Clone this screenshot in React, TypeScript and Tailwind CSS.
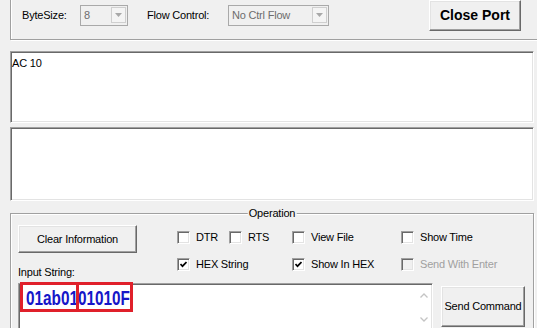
import React from "react";

// ── small win32-looking pieces ────────────────────────────────────────────────
function Combo({ value, width }: { value: string; width: string }) {
  return (
    <div
      className={`${width} h-[21px] flex items-center border border-[#a9a9a9] bg-[#f0f0f0]`}
    >
      <span className="pl-[3px] text-[#6d6d6d] leading-none">{value}</span>
      <span className="ml-auto mr-[1px] w-[15px] h-[16px] flex items-center justify-center border border-[#cfcfcf] bg-[#f4f4f4]">
        <svg width="7" height="4" viewBox="0 0 7 4">
          <polygon points="0,0 7,0 3.5,4" fill="#a8a8a8" />
        </svg>
      </span>
    </div>
  );
}

function Button({
  children,
  className = "",
}: {
  children: React.ReactNode;
  className?: string;
}) {
  return (
    <div
      className={`flex items-center justify-center whitespace-nowrap bg-[#f0f0f0] border border-t-white border-l-white border-r-[#696969] border-b-[#696969] shadow-[inset_-1px_-1px_0_#a0a0a0,inset_1px_1px_0_#e3e3e3] ${className}`}
    >
      {children}
    </div>
  );
}

function Check({
  label,
  checked,
  disabled,
  className = "",
}: {
  label: string;
  checked?: boolean;
  disabled?: boolean;
  className?: string;
}) {
  return (
    <div className={`flex items-center gap-[6px] h-[13px] whitespace-nowrap ${className}`}>
      <span
        className={`w-[13px] h-[13px] shrink-0 flex items-center justify-center border border-t-[#a0a0a0] border-l-[#a0a0a0] border-r-white border-b-white shadow-[inset_1px_1px_0_#696969,inset_-1px_-1px_0_#e3e3e3] ${
          disabled ? "bg-[#f0f0f0]" : "bg-white"
        }`}
      >
        {checked && (
          <svg width="7" height="7" viewBox="0 0 7 7">
            <polyline
              points="0.5,3 2.5,5.2 6.5,1"
              fill="none"
              stroke="#000"
              strokeWidth="1.7"
            />
          </svg>
        )}
      </span>
      <span className={`leading-none ${disabled ? "text-[#a0a0a0]" : ""}`}>
        {label}
      </span>
    </div>
  );
}

const SUNKEN =
  "border border-t-[#a0a0a0] border-l-[#a0a0a0] border-r-white border-b-white shadow-[inset_1px_1px_0_#696969,inset_-1px_-1px_0_#e3e3e3]";

// ── main ──────────────────────────────────────────────────────────────────────
export default function App() {
  return (
    <div className="w-[537px] h-[328px] overflow-hidden bg-[#f0f0f0] text-black text-[11px] tracking-[-0.2px] font-['Liberation_Sans',Arial,sans-serif]">
      {/* port settings group (top cut off) */}
      <div className="ml-[10px] -mt-[10px] w-[540px] h-[50px] border border-[#a0a0a0] shadow-[inset_1px_1px_0_#fff,1px_1px_0_#fff] flex items-center">
        <span className="ml-[11px] w-[58px]">ByteSize:</span>
        <Combo value="8" width="w-[48px]" />
        <span className="ml-[19px] w-[81px]">Flow Control:</span>
        <Combo value="No Ctrl Flow" width="w-[101px]" />
        <Button className="ml-[100px] w-[92px] h-[31px] font-bold text-[14px] tracking-normal">
          Close Port
        </Button>
      </div>

      {/* receive boxes */}
      <div className={`mt-[11px] ml-[10px] w-[524px] h-[72px] bg-white ${SUNKEN} pl-[1px] pt-[3px]`}>
        AC 10
      </div>
      <div className={`mt-[4px] ml-[10px] w-[524px] h-[74px] bg-white ${SUNKEN}`} />

      {/* Operation group */}
      <div className="relative mt-[12px] ml-[10px] w-[524px] h-[130px] border border-[#a0a0a0] shadow-[inset_1px_1px_0_#fff,1px_1px_0_#fff]">
        <span className="absolute -top-[8px] left-1/2 -translate-x-1/2 px-[1px] bg-[#f0f0f0] leading-[14px]">
          Operation
        </span>

        <div className="flex h-[69px]">
          <div className="ml-[7px] w-[119px] flex flex-col">
            <Button className="mt-[11px] h-[28px]">Clear Information</Button>
            <span className="mt-[12px] leading-[14px]">Input String:</span>
          </div>
          <div className="ml-[40px] mt-[17px] grid grid-cols-[52px_63px_109px_auto] gap-y-[14px] content-start">
            <Check label="DTR" />
            <Check label="RTS" />
            <Check label="View File" />
            <Check label="Show Time" />
            <Check label="HEX String" checked className="col-span-2" />
            <Check label="Show In HEX" checked />
            <Check label="Send With Enter" disabled />
          </div>
        </div>

        <div className="flex">
          <div className={`relative ml-[7px] w-[415px] h-[47px] bg-white ${SUNKEN} flex`}>
            <div className="flex-1 pl-[7px] pt-[2px] overflow-hidden">
              <span className="inline-block origin-left scale-x-[0.73] text-[21px] leading-[24px] tracking-normal font-bold text-[#1616c8] whitespace-nowrap">
                01ab0101010F
              </span>
            </div>
            <div className="w-[17px] flex flex-col items-center pt-[9px] gap-[19px]">
              <svg width="8" height="5" viewBox="0 0 8 5">
                <polyline points="0.5,4.5 4,1 7.5,4.5" fill="none" stroke="#c4c4c4" strokeWidth="1.3" />
              </svg>
              <svg width="8" height="5" viewBox="0 0 8 5">
                <polyline points="0.5,0.5 4,4 7.5,0.5" fill="none" stroke="#c4c4c4" strokeWidth="1.3" />
              </svg>
            </div>
            {/* caret */}
            <span className="absolute left-[111px] top-[5px] w-[1px] h-[18px] bg-black" />
            {/* red annotation boxes */}
            <span className="absolute left-[1px] -top-[2px] w-[59px] h-[30px] border-[3px] border-[#e0202a]" />
            <span className="absolute left-[57px] -top-[2px] w-[57px] h-[30px] border-[3px] border-[#e0202a]" />
          </div>
          <Button className="ml-[8px] mt-[3px] w-[84px] h-[41px]">Send Command</Button>
        </div>
      </div>
    </div>
  );
}
